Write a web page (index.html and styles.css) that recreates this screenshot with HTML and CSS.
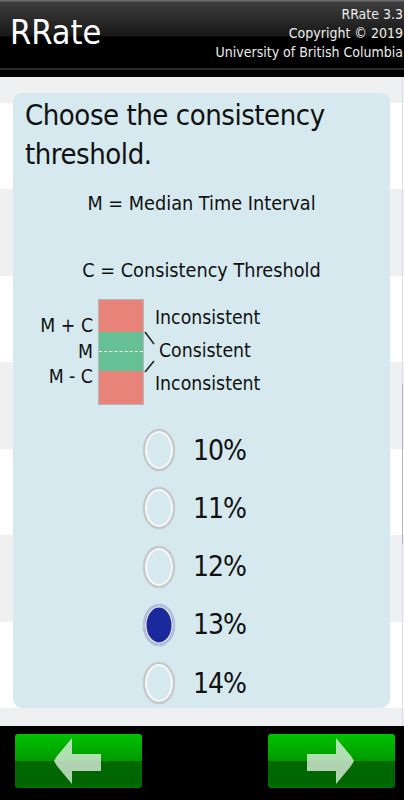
FILE: index.html
```html
<!DOCTYPE html>
<html>
<head>
<meta charset="utf-8">
<link rel="stylesheet" href="styles.css">
</head>
<body>
<div class="app">
  <header class="topbar">
    <div class="brand">RRate</div>
    <div class="meta">
      <div>RRate 3.3</div>
      <div>Copyright © 2019</div>
      <div>University of British Columbia</div>
    </div>
  </header>
  <main class="content">
    <section class="dialog">
      <h1 class="question">Choose the consistency threshold.</h1>
      <p class="def def-m">M = Median Time Interval</p>
      <p class="def def-c">C = Consistency Threshold</p>
      <div class="diagram">
        <div class="scale-labels">
          <div>M + C</div>
          <div>M</div>
          <div>M - C</div>
        </div>
        <div class="bar">
          <div class="zone zone-hi"></div>
          <div class="zone zone-ok"><span class="median"></span></div>
          <div class="zone zone-lo"></div>
        </div>
        <svg class="connector" width="11" height="106" viewBox="0 0 11 106">
          <line x1="1" y1="33" x2="10" y2="45" />
          <line x1="1" y1="73" x2="10" y2="62" />
        </svg>
        <div class="zone-labels">
          <div>Inconsistent</div>
          <div>Consistent</div>
          <div>Inconsistent</div>
        </div>
      </div>
      <div class="options">
        <label class="option"><span class="radio"></span><span class="pct">10%</span></label>
        <label class="option"><span class="radio"></span><span class="pct">11%</span></label>
        <label class="option"><span class="radio"></span><span class="pct">12%</span></label>
        <label class="option"><span class="radio checked"></span><span class="pct">13%</span></label>
        <label class="option"><span class="radio"></span><span class="pct">14%</span></label>
      </div>
    </section>
    <div class="scrollbar"><div class="thumb"></div></div>
  </main>
  <footer class="navbar">
    <button class="nav-btn" aria-label="Back">
      <svg width="127" height="54" viewBox="0 0 127 54"><polygon points="57,4 57,20 86,20 86,37 57,37 57,50 42,32 39,27 42,22" /></svg>
    </button>
    <button class="nav-btn" aria-label="Next">
      <svg width="127" height="54" viewBox="0 0 127 54"><polygon points="68,4 68,20 39,20 39,37 68,37 68,50 83,32 86,27 83,22" /></svg>
    </button>
  </footer>
</div>
</body>
</html>
```
FILE: styles.css
```css
* { box-sizing: border-box; }
html, body { margin: 0; padding: 0; background: #000; }
body {
  font-family: "DejaVu Sans Condensed", "DejaVu Sans", sans-serif;
  font-stretch: condensed;
}
.app {
  width: 404px;
  height: 800px;
  display: flex;
  flex-direction: column;
  overflow: hidden;
}
.topbar {
  height: 77px;
  flex: none;
  display: flex;
  justify-content: space-between;
  align-items: flex-start;
  background: linear-gradient(to bottom, #6a6a6a 0, #6a6a6a 1px, #3e3e3e 2px, #171717 36px, #000 37px, #000 68px, #2b2b2b 68px, #2b2b2b 70px, #000 70px);
  color: #fff;
}
.brand {
  font-size: 34px;
  line-height: 40px;
  padding: 12px 0 0 10px;
}
.meta {
  text-align: right;
  font-size: 14px;
  line-height: 19px;
  padding: 5px 1px 0 0;
  color: #ececec;
}
.content {
  position: relative;
  flex: 1;
  padding: 16px 14px 0 13px;
  background: repeating-linear-gradient(to bottom, #eff0f2 -61px, #eff0f2 26px, #ffffff 26px, #ffffff 112px);
}
.dialog {
  height: 615px;
  background: #d6e9ef;
  border-radius: 9px;
  padding: 3px 0 0 12px;
  overflow: hidden;
  color: #111;
}
.question {
  margin: 0;
  font-weight: normal;
  font-size: 29px;
  letter-spacing: -0.45px;
  line-height: 39px;
}
.def {
  margin: 0;
  text-align: center;
  font-size: 19.7px;
  line-height: 24px;
  padding-right: 12px;
}
.def-m { margin-top: 18px; }
.def-c { margin-top: 43px; }
.diagram {
  margin-top: 16px;
  height: 106px;
  display: flex;
  font-size: 19.3px;
}
.scale-labels {
  width: 68px;
  margin-right: 5px;
  text-align: right;
  padding-top: 14px;
  line-height: 25.5px;
}
.bar {
  width: 46px;
  height: 106px;
  display: flex;
  flex-direction: column;
  border: 1px solid rgba(120, 90, 90, 0.35);
}
.zone-hi { height: 32px; background: #e8837a; }
.zone-ok {
  height: 39px;
  background: #66c096;
  display: flex;
  align-items: center;
}
.zone-ok .median {
  width: 100%;
  border-top: 1px dashed #fff;
}
.zone-lo { flex: 1; background: #e8837a; }
.connector line { stroke: #222; stroke-width: 1.6; }
.zone-labels {
  padding-top: 2px;
  line-height: 33px;
}
.zone-labels div:nth-child(2) { padding-left: 4px; }
.options {
  margin-top: 16px;
  padding-left: 118px;
}
.option {
  height: 58.25px;
  display: flex;
  align-items: center;
  gap: 18px;
}
.radio {
  width: 32px;
  height: 42px;
  border-radius: 50%;
  border: 2.5px solid #c6c6c6;
  box-shadow: inset 0 0 0 2px #f7f8f9, 0 0 1px rgba(0,0,0,0.2);
  flex: none;
}
.radio.checked {
  border: 2px solid #b7c0e0;
  background: #1b299f;
  box-shadow: inset 0 0 0 1.5px #e8ecf8, 0 0 1px rgba(0,0,80,0.3);
}
.pct {
  font-size: 28px;
  letter-spacing: -1px;
  color: #111;
}
.scrollbar {
  position: absolute;
  right: 1px;
  top: 0;
  bottom: 0;
  width: 1px;
  background: #dcdee1;
}
.thumb {
  position: absolute;
  top: 307px;
  height: 160px;
  left: 0;
  width: 1px;
  background: #b4b8bc;
}
.navbar {
  height: 74px;
  flex: none;
  background: #000;
  display: flex;
  justify-content: space-between;
  padding: 8px 9px 0 15px;
}
.nav-btn {
  width: 127px;
  height: 54px;
  padding: 0;
  border: none;
  border-radius: 3px;
  background: linear-gradient(to bottom, #00c100 0, #009a00 27px, #006a00 27px, #006400 48px, #007000 54px);
  display: block;
}
.nav-btn svg { display: block; }
.nav-btn polygon { fill: rgba(225, 240, 225, 0.78); }
```
